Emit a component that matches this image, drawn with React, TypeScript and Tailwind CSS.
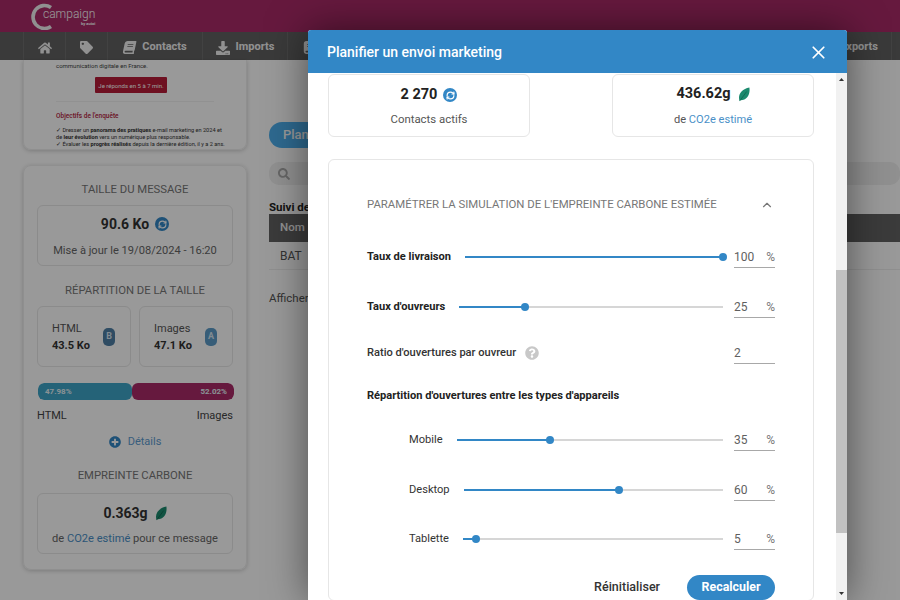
import { ChevronUp, RefreshCw, X } from 'lucide-react'
import { FaBook, FaDownload, FaHome, FaPlusCircle, FaQuestionCircle, FaSearch, FaTag } from 'react-icons/fa'

function SyncBadge() {
  return (
    <span className="flex h-[14px] w-[14px] shrink-0 items-center justify-center rounded-full bg-[#3287c6]">
      <RefreshCw size={9} strokeWidth={3.2} className="text-white" />
    </span>
  )
}

function Leaf() {
  return (
    <svg width="12" height="15" viewBox="0 0 12 15" className="shrink-0">
      <path d="M1.6 14.2C-.6 8 3.4 2 11.4.6 12.4 7.4 9 13 2.6 13.2Z" fill="#1c8a6e" />
      <path d="M2 13.6 8.6 4.6" stroke="#0f5f4b" strokeWidth="0.7" fill="none" />
    </svg>
  )
}

function LetterPill({ letter, color }: { letter: string; color: string }) {
  return (
    <span className={`flex h-[18px] w-[12px] items-center justify-center rounded-[5px] text-[9px] font-bold text-[#d8e6f2] ${color}`}>
      {letter}
    </span>
  )
}

function NavItem({ icon, label, className }: { icon: React.ReactNode; label?: string; className: string }) {
  return (
    <div className={`flex h-full items-center gap-[6px] border-r border-[#6e6e6e] pt-[3px] text-[11px] font-bold text-[#f2f2f2] ${className}`}>
      {icon}
      {label && <span>{label}</span>}
    </div>
  )
}

function Slider({ value }: { value: number }) {
  return (
    <div className="relative h-[2px] flex-1 bg-[#d6d6d6]">
      <div className="h-full bg-[#3287c6]" style={{ width: `${value}%` }} />
      <div
        className="absolute top-1/2 h-[8px] w-[8px] -translate-x-1/2 -translate-y-1/2 rounded-full bg-[#3287c6]"
        style={{ left: `${value}%` }}
      />
    </div>
  )
}

function ValueInput({ value, unit }: { value: string; unit?: string }) {
  return (
    <div className="-mt-[2px] ml-[11px] flex h-[24px] w-[41px] items-center justify-between border-b border-[#a8a8a8] pt-[2px] text-[12px] text-[#5f5f5f]">
      <span>{value}</span>
      {unit && <span className="text-[#777]">{unit}</span>}
    </div>
  )
}

function SliderRow(props: { label: string; value: number; bold?: boolean; indent?: boolean; className: string }) {
  const { label, value, bold, indent, className } = props
  return (
    <div className={`flex h-[24px] items-center ${indent ? 'pl-[42px]' : ''} ${className}`}>
      <span className={`mr-[14px] text-[11.1px] ${bold ? 'font-bold text-[#222]' : 'text-[#333]'}`}>{label}</span>
      <Slider value={value} />
      <ValueInput value={String(value)} unit="%" />
    </div>
  )
}

function Sidebar() {
  return (
    <aside className="ml-[23px] flex w-[224px] shrink-0 flex-col">
      <div className="flex h-[90px] flex-col justify-end overflow-hidden rounded-b-[8px] border border-t-0 border-[#eeeeee] px-[32px] pb-[1px] shadow-[0_1px_4px_rgba(0,0,0,0.2)]">
        <p className="text-[6px] leading-[8px] text-[#444]">communication digitale en France.</p>
        <div className="ml-[39px] mt-[7px] flex h-[16px] w-[72px] items-center justify-center rounded-[1px] bg-[#b71c38] text-[6px] text-white">
          Je réponds en 5 à 7 min.
        </div>
        <div className="mt-[8px] border-t border-[#f2f2f2] pt-[10px] text-[6.5px] font-medium text-[#b3243d]">Objectifs de l'enquête</div>
        <p className="mt-[5px] whitespace-nowrap text-[5.6px] leading-[7px] text-[#333]">
          ✓ Dresser un <b>panorama des pratiques</b> e-mail marketing en 2024 et
          <br />
          de <b>leur évolution</b> vers un numérique plus responsable.
          <br />✓ Évaluer les <b>progrès réalisés</b> depuis la dernière édition, il y a 2 ans.
        </p>
      </div>

      <div className="mt-[15px] flex h-[405px] flex-col rounded-[8px] border border-[#eeeeee] px-[13px] shadow-[0_1px_4px_rgba(0,0,0,0.2)]">
        <h3 className="mt-[16px] text-center text-[11.3px] leading-[16px] text-[#777]">TAILLE DU MESSAGE</h3>
        <div className="mt-[7px] flex h-[61px] flex-col items-center rounded-[6px] border border-[#e8e8e8] pt-[9px]">
          <div className="flex items-center gap-[6px] text-[14px] font-bold leading-[18px] text-[#333]">
            90.6 Ko <SyncBadge />
          </div>
          <p className="mt-[11px] text-[11.1px] leading-[14px] text-[#666]">Mise à jour le 19/08/2024 - 16:20</p>
        </div>
        <h3 className="mt-[17px] text-center text-[11.3px] leading-[16px] text-[#777]">RÉPARTITION DE LA TAILLE</h3>
        <div className="mt-[7px] grid grid-cols-2 gap-[8px]">
          <div className="flex h-[61px] items-center justify-between rounded-[6px] border border-[#e8e8e8] pl-[14px] pr-[15px]">
            <div className="text-[11px] leading-[17px] text-[#555]">
              HTML
              <div className="font-bold text-[#333]">43.5 Ko</div>
            </div>
            <LetterPill letter="B" color="bg-[#4f7fa6]" />
          </div>
          <div className="flex h-[61px] items-center justify-between rounded-[6px] border border-[#e8e8e8] pl-[14px] pr-[15px]">
            <div className="text-[11px] leading-[17px] text-[#555]">
              Images
              <div className="font-bold text-[#333]">47.1 Ko</div>
            </div>
            <LetterPill letter="A" color="bg-[#5d9cc9]" />
          </div>
        </div>
        <div className="ml-[1px] mr-[-1px] mt-[16px] flex h-[17px] overflow-hidden rounded-[6px] text-[8px] font-bold leading-[17px] text-[#e6f4f8]">
          <div className="w-[94px] rounded-[6px] bg-[#3fa5c8] pl-[7px]">47.98%</div>
          <div className="flex-1 rounded-[6px] bg-[#aa2b68] pr-[7px] text-right">52.02%</div>
        </div>
        <div className="mt-[8px] flex justify-between text-[11px] leading-[16px] text-[#444]">
          <span>HTML</span>
          <span>Images</span>
        </div>
        <div className="mt-[10px] flex items-center justify-center gap-[7px] text-[11px] leading-[16px] text-[#5d9bd0]">
          <FaPlusCircle size={12} className="text-[#3287c6]" />
          Détails
        </div>
        <h3 className="mt-[18px] text-center text-[11.3px] leading-[16px] text-[#777]">EMPREINTE CARBONE</h3>
        <div className="mt-[9px] flex h-[61px] flex-col items-center rounded-[6px] border border-[#e8e8e8] pt-[10px]">
          <div className="flex items-center gap-[7px] text-[14px] font-bold leading-[18px] text-[#333]">
            0.363g <Leaf />
          </div>
          <p className="mt-[10px] text-[11.1px] leading-[14px] text-[#666]">
            de <span className="text-[#4a90c8]">CO2e estimé</span> pour ce message
          </p>
        </div>
      </div>
    </aside>
  )
}

function Campaign() {
  return (
    <section className="ml-[22px] min-w-0 flex-1">
      <div className="mt-[62px] flex h-[26px] w-[120px] items-center rounded-full bg-[#4db0ee] pl-[14px] text-[13px] font-medium text-white">
        Planifier
      </div>
      <div className="mt-[14px] flex h-[23px] items-center rounded-[10px] bg-[#f0f0f0] pl-[9px]">
        <FaSearch size={12} className="text-[#aaa]" />
      </div>
      <div className="mt-[15px] text-[11.5px] font-bold leading-[14px] text-[#222]">Suivi des envois</div>
      <div className="flex h-[28px] items-center bg-[#636363] pl-[11px] text-[11.5px] font-medium text-[#f2f2f2]">Nom</div>
      <div className="flex h-[28px] items-center border-b border-[#eeeeee] pl-[11px] text-[12px] text-[#555]">BAT</div>
      <div className="mt-[21px] text-[11.5px] leading-[14px] text-[#555]">Afficher</div>
    </section>
  )
}

function PlanModal() {
  return (
    <div className="absolute left-[308px] top-[30px] flex h-[570px] w-[539px] flex-col rounded-t-[3px] bg-white shadow-[0_0_40px_rgba(0,0,0,0.5)]">
      <header className="flex h-[43px] shrink-0 items-center justify-between rounded-t-[3px] bg-[#3287c6] pl-[19px] pr-[18px] pt-[1px] text-[14px] font-medium text-white">
        Planifier un envoi marketing
        <X size={21} strokeWidth={2} />
      </header>
      <div className="flex min-h-0 flex-1">
        <div className="min-w-0 flex-1 overflow-hidden pl-[20px] pr-[22px]">
          <div className="mt-[1px] flex justify-between">
            <div className="flex h-[63px] w-[202px] flex-col items-center rounded-[6px] border border-[#e6e6e6] pt-[11px]">
              <div className="flex items-center gap-[6px] text-[14.5px] font-bold leading-[18px] text-[#222]">
                2 270 <SyncBadge />
              </div>
              <p className="mt-[8px] text-[11.4px] leading-[14px] text-[#555]">Contacts actifs</p>
            </div>
            <div className="flex h-[63px] w-[202px] flex-col items-center rounded-[6px] border border-[#e6e6e6] pt-[10px]">
              <div className="flex items-center gap-[7px] text-[14.5px] font-bold leading-[18px] text-[#222]">
                436.62g <Leaf />
              </div>
              <p className="mt-[10px] text-[11.1px] leading-[14px] text-[#555]">
                de <span className="text-[#4a90c8]">CO2e estimé</span>
              </p>
            </div>
          </div>

          <div className="mt-[22px] rounded-[6px] border border-[#e6e6e6] px-[38px] pt-[37px]">
            <div className="flex h-[16px] items-center justify-between text-[11.4px] text-[#777]">
              PARAMÉTRER LA SIMULATION DE L'EMPREINTE CARBONE ESTIMÉE
              <ChevronUp size={14} strokeWidth={2} className="mr-[1px] text-[#777]" />
            </div>
            <SliderRow label="Taux de livraison" value={100} bold className="mt-[32px]" />
            <SliderRow label="Taux d'ouvreurs" value={25} bold className="mt-[26px]" />
            <div className="mt-[22px] flex h-[24px] items-center justify-between">
              <div className="flex items-center gap-[9px] text-[11.1px] font-medium text-[#333]">
                Ratio d'ouvertures par ouvreur
                <FaQuestionCircle size={14} className="text-[#c8c8c8]" />
              </div>
              <ValueInput value="2" />
            </div>
            <div className="mt-[23px] h-[16px] text-[11.1px] font-bold leading-[16px] text-[#222]">
              Répartition d'ouvertures entre les types d'appareils
            </div>
            <SliderRow label="Mobile" value={35} indent className="mt-[24px]" />
            <SliderRow label="Desktop" value={60} indent className="mt-[26px]" />
            <SliderRow label="Tablette" value={5} indent className="mt-[25px]" />
            <div className="mt-[24px] flex items-center justify-end gap-[27px]">
              <span className="text-[12.5px] font-medium text-[#333]">Réinitialiser</span>
              <span className="flex h-[25px] w-[88px] items-center justify-center rounded-full bg-[#3287c6] text-[12.4px] font-bold text-white">
                Recalculer
              </span>
            </div>
          </div>
        </div>

        <div className="flex w-[11px] shrink-0 flex-col items-center bg-[#f1f1f1]">
          <svg width="7" height="14" viewBox="0 0 7 14" className="shrink-0">
            <path d="M3.5 5 6 8H1Z" fill="#333" />
          </svg>
          <div className="mt-[183px] h-[263px] w-full bg-[#c1c1c1]" />
          <svg width="7" height="12" viewBox="0 0 7 12" className="mt-auto shrink-0">
            <path d="M1 4H6L3.5 7Z" fill="#333" />
          </svg>
        </div>
      </div>
    </div>
  )
}

export default function App() {
  return (
    <div className="relative flex h-[600px] w-[900px] flex-col overflow-hidden bg-white font-['Roboto',sans-serif]">
      <header className="flex h-[32px] shrink-0 items-center bg-[#aa2b68] pl-[28px]">
        <svg width="26" height="28" viewBox="0 0 26 28" className="shrink-0">
          <path d="M23 5.5A11.5 11.5 0 1 0 23 24.5" fill="none" stroke="#f0f0f0" strokeWidth="3.6" />
        </svg>
        <div className="-ml-[11px] flex flex-col items-end pt-[3px] text-white">
          <span className="text-[12px] font-light leading-[13px]">campaign</span>
          <span className="text-[4px] font-bold leading-[6px]">by autoi</span>
        </div>
      </header>
      <nav className="flex h-[28px] shrink-0 bg-[#626262] pl-[23px] pr-[8px]">
        <NavItem icon={<FaHome size={14} />} className="w-[43px] justify-center border-l" />
        <NavItem icon={<FaTag size={13} />} className="w-[42px] justify-center" />
        <NavItem icon={<FaBook size={13} className="-skew-x-12" />} label="Contacts" className="w-[95px] justify-center" />
        <NavItem icon={<FaDownload size={14} />} label="Imports" className="w-[85px] justify-center" />
        <NavItem icon={<FaBook size={13} />} className="pl-[15px]" />
        <NavItem icon={<FaDownload size={14} />} label="Exports" className="ml-auto pl-[15px] pr-[13px]" />
      </nav>
      <main className="flex min-h-0 flex-1">
        <Sidebar />
        <Campaign />
      </main>
      <div className="absolute inset-0 bg-black/40" />
      <PlanModal />
    </div>
  )
}
